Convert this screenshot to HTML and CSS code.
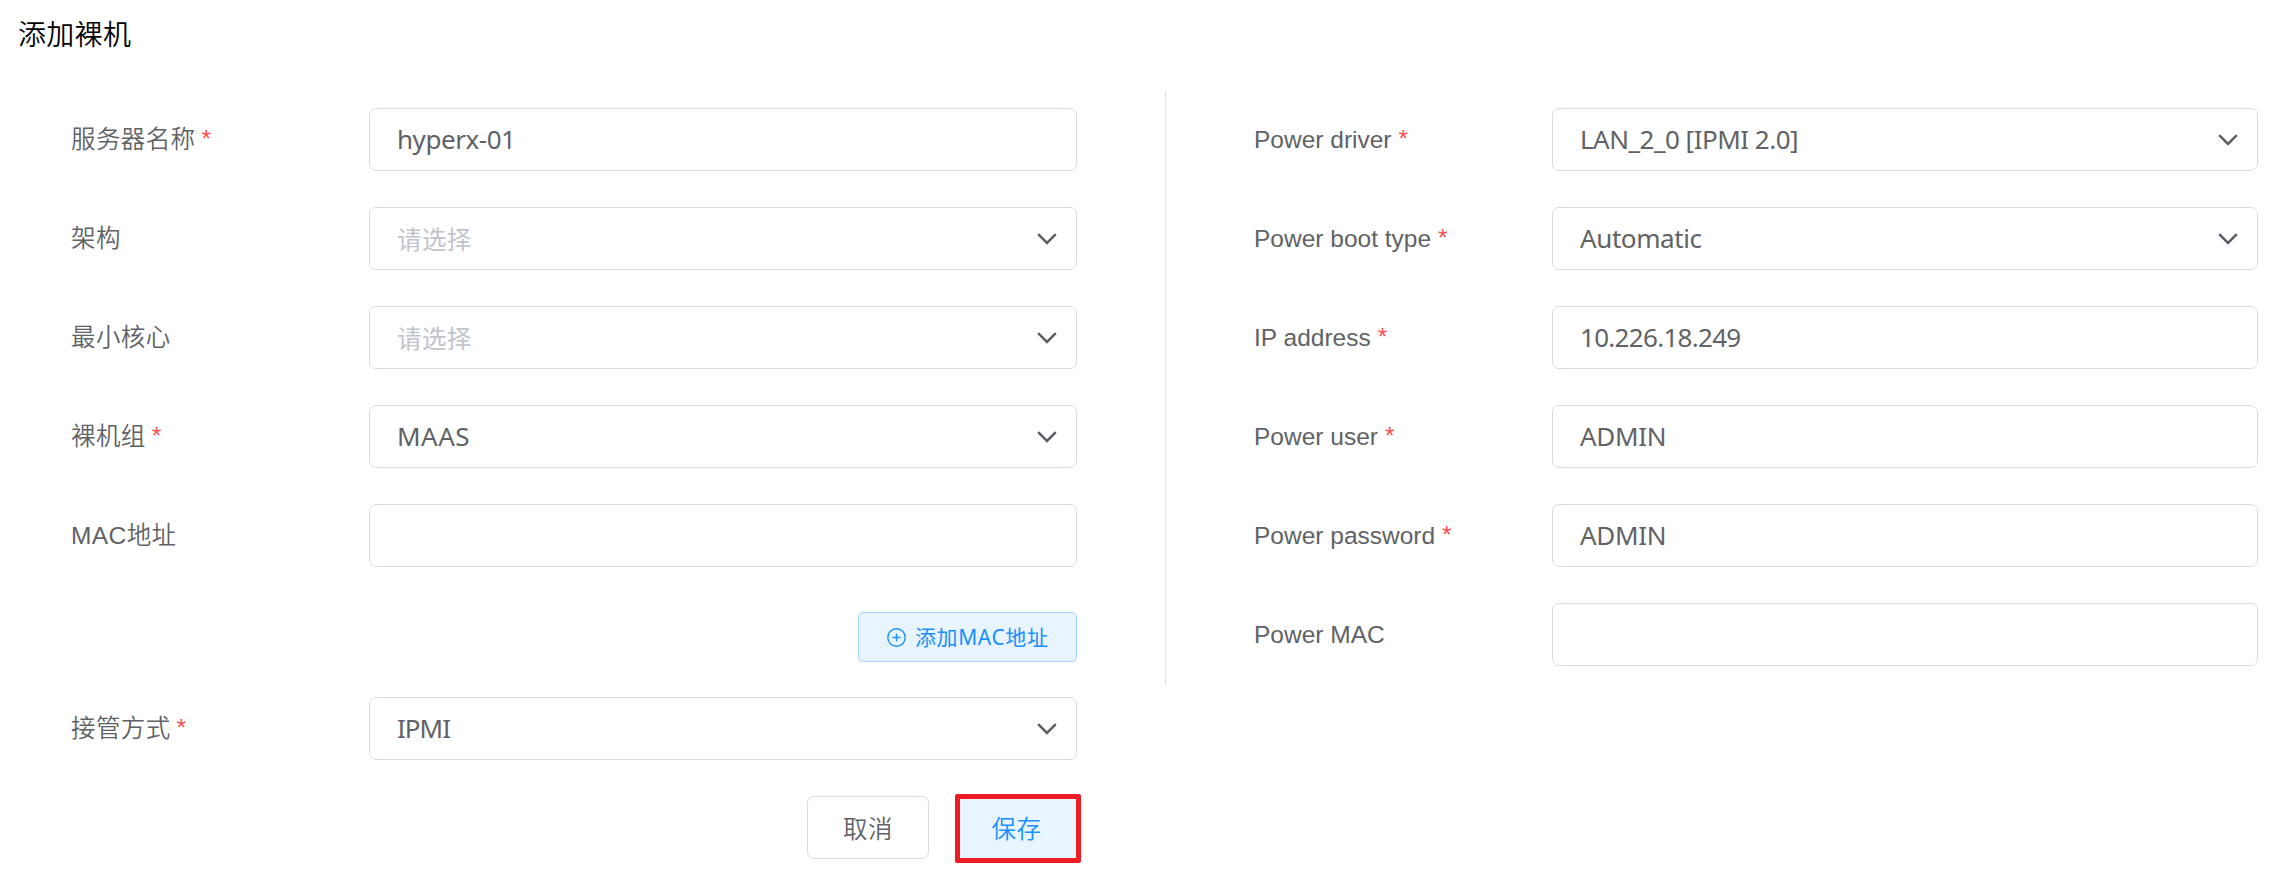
FILE: index.html
```html
<!DOCTYPE html>
<html lang="zh-CN">
<head>
<meta charset="utf-8">
<title>添加裸机</title>
<link rel="stylesheet" href="styles.css">
</head>
<body>
<svg class="defs" width="0" height="0">
  <symbol id="chevron" viewBox="0 0 20 12"><path d="M1.2 1.2 10 10 18.8 1.2" fill="none" stroke="currentColor" stroke-width="2.5"/></symbol>
</svg>
<h1 class="title">添加裸机</h1>
<main class="form">
  <section class="col col-main">
    <div class="row"><label class="label">服务器名称<span class="req">*</span></label><div class="field"><span class="t-host">hyperx-01</span></div></div>
    <div class="row"><label class="label">架构</label><div class="field"><span class="placeholder">请选择</span><svg class="chev"><use href="#chevron"/></svg></div></div>
    <div class="row"><label class="label">最小核心</label><div class="field"><span class="placeholder">请选择</span><svg class="chev"><use href="#chevron"/></svg></div></div>
    <div class="row"><label class="label">裸机组<span class="req">*</span></label><div class="field"><span class="t-group">MAAS</span><svg class="chev"><use href="#chevron"/></svg></div></div>
    <div class="row"><label class="label">MAC地址</label><div class="field"></div></div>
    <div class="add-row">
      <button class="btn-add"><svg class="plus" viewBox="0 0 19 19"><circle cx="9.5" cy="9.5" r="8.7"/><path d="M5.5 9.5h8M9.5 5.5v8"/></svg><span>添加MAC地址</span></button>
    </div>
    <div class="row"><label class="label">接管方式<span class="req">*</span></label><div class="field"><span class="t-ipmi">IPMI</span><svg class="chev"><use href="#chevron"/></svg></div></div>
    <div class="actions">
      <button class="btn">取消</button>
      <button class="btn btn-save">保存</button>
    </div>
  </section>
  <section class="col col-power">
    <div class="row"><label class="label">Power driver<span class="req">*</span></label><div class="field"><span class="t-lan">LAN_2_0 [IPMI 2.0]</span><svg class="chev"><use href="#chevron"/></svg></div></div>
    <div class="row"><label class="label">Power boot type<span class="req">*</span></label><div class="field"><span class="t-auto">Automatic</span><svg class="chev"><use href="#chevron"/></svg></div></div>
    <div class="row"><label class="label">IP address<span class="req">*</span></label><div class="field"><span class="t-ip">10.226.18.249</span></div></div>
    <div class="row"><label class="label">Power user<span class="req">*</span></label><div class="field"><span class="t-admin">ADMIN</span></div></div>
    <div class="row"><label class="label">Power password<span class="req">*</span></label><div class="field"><span class="t-admin">ADMIN</span></div></div>
    <div class="row"><label class="label">Power MAC</label><div class="field"></div></div>
  </section>
</main>
</body>
</html>
```
FILE: styles.css
```css
* { box-sizing: border-box; }
body {
  margin: 0;
  min-height: 873px;
  background: #fff;
  color: #606266;
  font-family: "Liberation Sans", "Noto Sans CJK SC", sans-serif;
  font-size: 24.5px;
}
.defs { display: block; }
.title {
  margin: 0;
  height: 91px;
  padding: 16px 0 0 18px;
  font-size: 28px;
  font-weight: 350;
  line-height: 40px;
  letter-spacing: 0.3px;
  color: #000;
}
.form { display: flex; align-items: flex-start; }
.col { display: flex; flex-direction: column; gap: 36px; padding-top: 17px; }
.col-main { width: 1165px; padding-left: 71px; padding-right: 88px; }
.col-power {
  width: 1093px;
  height: 594px;
  padding-left: 88px;
  border-left: 1px solid #e0e1e6;
}
.row { display: flex; height: 63px; flex: none; }
.label {
  width: 298px;
  line-height: 63px;
  font-weight: 350;
  white-space: nowrap;
}
.col-main .label { letter-spacing: 0.4px; }
.req { color: #ff4d4f; margin-left: 6px; line-height: 1; vertical-align: 1px; }
.col-power .req { margin-left: 7px; }
.field {
  flex: 1;
  display: flex;
  align-items: center;
  justify-content: space-between;
  padding: 0 19px 0 27px;
  border: 1px solid #dadce5;
  border-radius: 7px;
  font-family: "Noto Sans", "Noto Sans CJK SC", sans-serif;
  font-size: 26px;
  line-height: 61px;
}
.placeholder {
  font-family: "Noto Sans CJK SC", sans-serif;
  font-size: 24.5px;
  font-weight: 400;
  letter-spacing: 0.4px;
  color: #c0c4cc;
}
.chev { width: 20px; height: 12px; color: #5a5e66; }
.t-host { letter-spacing: -0.45px; }
.t-group { letter-spacing: 0.5px; }
.t-ipmi { letter-spacing: -1px; }
.t-admin { letter-spacing: -0.3px; }
.t-lan { letter-spacing: -0.5px; }
.t-auto { letter-spacing: -0.4px; }
.t-ip { letter-spacing: -0.7px; }
.add-row { display: flex; justify-content: flex-end; height: 58px; padding-top: 9px; }
.btn-add {
  display: flex;
  align-items: center;
  gap: 9px;
  width: 219px;
  height: 50px;
  padding: 0 0 0 28px;
  border: 1px solid #a3d3ff;
  border-radius: 5px;
  background: #e8f4ff;
  color: #1890ff;
  font: 400 21px/48px "Noto Sans", "Noto Sans CJK SC", sans-serif;
  letter-spacing: 0.6px;
  white-space: nowrap;
}
.plus { width: 19px; height: 19px; fill: none; stroke: currentColor; stroke-width: 1.4; }
.actions { display: flex; justify-content: flex-end; gap: 26px; height: 63px; }
.btn {
  width: 122px;
  height: 63px;
  padding: 0;
  border: 1px solid #dadce5;
  border-radius: 7px;
  background: #fff;
  color: #606266;
  font: 350 24.5px/61px "Noto Sans CJK SC", sans-serif;
  letter-spacing: 0.4px;
}
.btn-save {
  width: 126px;
  height: 69px;
  margin: -2px -4px 0 0;
  padding: 0 3px 2px 0;
  border: 5px solid #ed1c24;
  border-radius: 2px;
  background: #e8f4ff;
  color: #1890ff;
  line-height: 57px;
}
```
